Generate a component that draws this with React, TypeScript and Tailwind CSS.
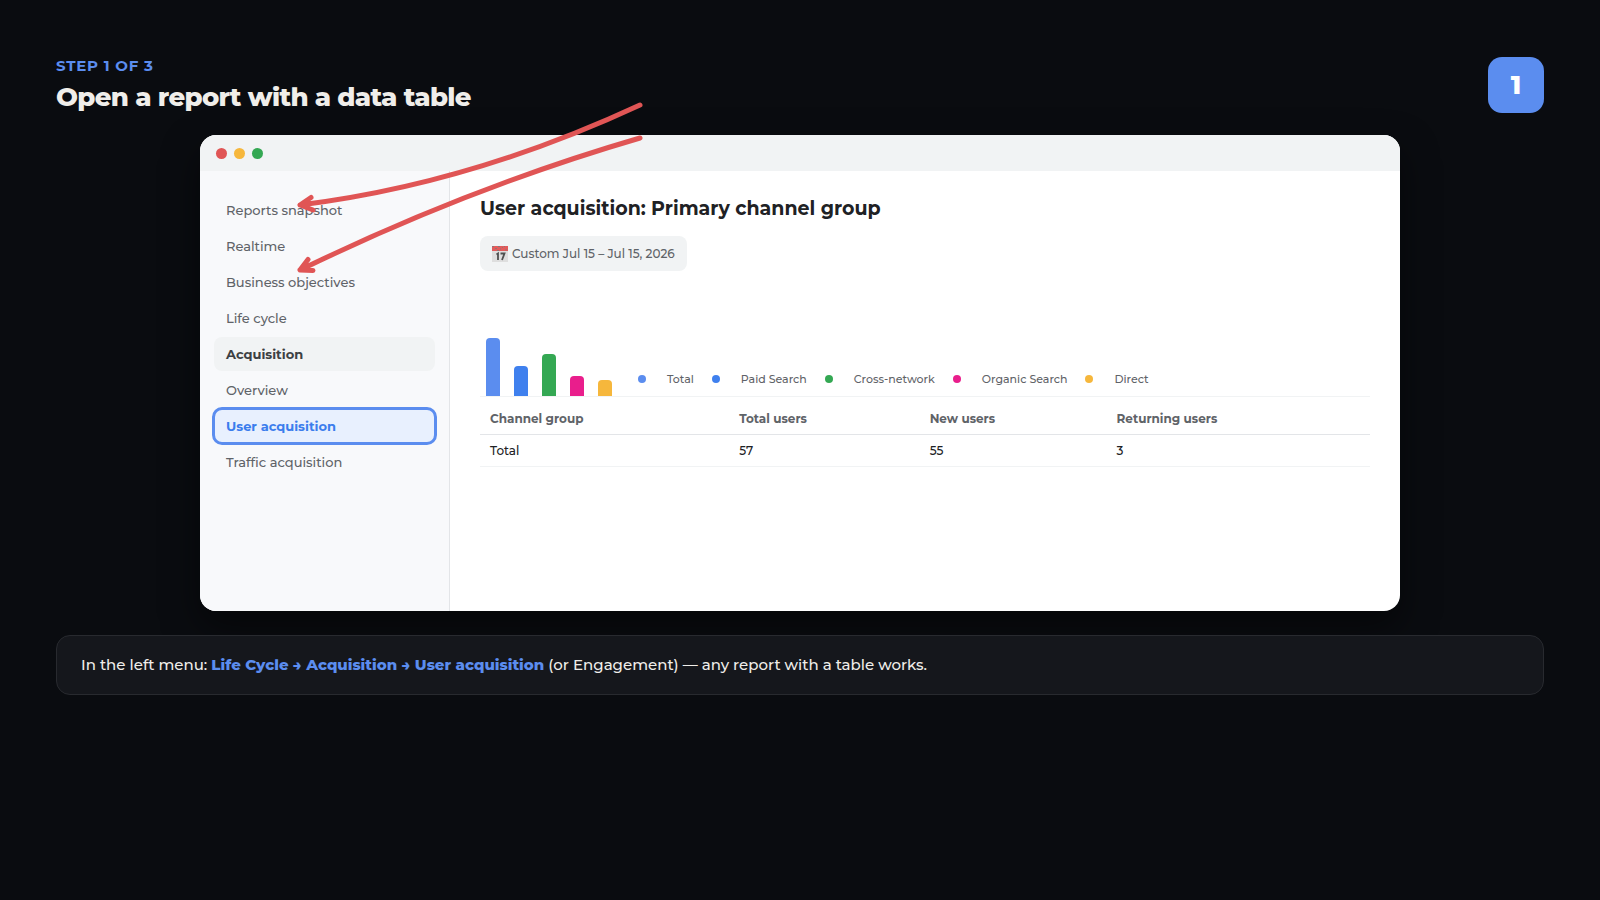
const menu = [
  { label: "Reports snapshot" },
  { label: "Realtime" },
  { label: "Business objectives" },
  { label: "Life cycle" },
  { label: "Acquisition", state: "open" },
  { label: "Overview" },
  { label: "User acquisition", state: "current" },
  { label: "Traffic acquisition" },
];

const bars = ["h-[58px] bg-[#5b8def]", "h-[30px] bg-[#3f80ee]", "h-[42px] bg-[#34a853]", "h-5 bg-[#e91e8c]", "h-4 bg-[#f6b73c]"];

const legend = [
  { label: "Total", dot: "bg-[#5b8def]" },
  { label: "Paid Search", dot: "bg-[#3f80ee]" },
  { label: "Cross-network", dot: "bg-[#34a853]" },
  { label: "Organic Search", dot: "bg-[#e91e8c]" },
  { label: "Direct", dot: "bg-[#f6b73c]" },
];

function menuClass(state?: string) {
  if (state === "open") return "bg-[#f1f3f4] font-bold text-[#3c4043]";
  if (state === "current") return "bg-[#e8f0fe] font-bold text-[#3b7ded] outline-3 -outline-offset-1 outline-[#5b8def]";
  return "font-medium text-[#5f6368]";
}

function CalendarIcon() {
  return (
    <svg className="size-4 shrink-0" viewBox="0 0 16 16" aria-hidden="true">
      <rect width="16" height="16" fill="#dedede" />
      <rect width="16" height="5" fill="#e35b5b" />
      <path d="M0 .5h2M3 2.500h2M6 .5h2M8 3h1M10 1.500h1M12 .5h1M14 3v1.500M5 4.500h2" stroke="#8d7676" />
      <path d="M4.500 8.500l1.500-1V14M8.500 7.500h4L10 14" fill="none" stroke="#505050" strokeWidth="1.800" />
    </svg>
  );
}

function Arrows() {
  return (
    <svg
      className="pointer-events-none absolute top-[-35px] left-[90px] h-[180px] w-[360px]"
      viewBox="290 100 360 180"
      fill="none"
      stroke="#e05555"
      strokeWidth="5"
      strokeLinecap="round"
      strokeLinejoin="round"
      aria-hidden="true"
    >
      <path d="M640 105Q470 184 300 205M311 197.500L300 205L313 210" />
      <path d="M640 138Q470 187.500 300 270M308 259.500L300 270L313 270.500" />
    </svg>
  );
}

export default function App() {
  return (
    <div className="min-h-screen bg-[#0a0c10] px-14 pt-14 pb-10 font-['Montserrat','Inter',sans-serif]">
      <header className="flex items-start justify-between">
        <div>
          <p className="text-[15px] leading-5 font-bold tracking-wider text-[#5b8def] uppercase">Step 1 of 3</p>
          <h1 className="mt-[5px] text-[26px] leading-8 font-extrabold tracking-tight text-[#f0eeea]">Open a report with a data table</h1>
        </div>
        <div className="mt-px flex size-14 items-center justify-center rounded-[14px] bg-[#5b8def] text-[26px] font-extrabold text-white">
          1
        </div>
      </header>

      <div className="relative mx-auto mt-[22px] max-w-[1200px]">
        <section className="overflow-hidden rounded-2xl bg-white shadow-[0_16px_36px_rgba(0,0,0,0.5)]">
          <div className="flex h-9 items-center gap-[7px] bg-[#f1f3f4] px-4">
            <span className="size-[11px] rounded-full bg-[#e05555]" />
            <span className="size-[11px] rounded-full bg-[#f6b73c]" />
            <span className="size-[11px] rounded-full bg-[#34a853]" />
          </div>
          <div className="flex min-h-[440px]">
            <nav className="flex w-[250px] shrink-0 flex-col gap-0.5 border-r border-[#e3e5e8] bg-[#f8f9fb] px-3.5 py-[22px]">
              {menu.map(({ label, state }) => (
                <a key={label} href="#" className={`rounded-lg px-3 py-[7px] text-[13px] leading-5 ${menuClass(state)}`}>
                  {label}
                </a>
              ))}
            </nav>
            <main className="min-w-0 flex-1 px-[30px] pt-[25px]">
              <h2 className="text-[19px] leading-[26px] font-bold text-[#202124]">User acquisition: Primary channel group</h2>
              <button className="mt-3.5 flex items-center gap-1 rounded-lg bg-[#f1f3f4] px-3 pt-[9px] pb-2 text-xs leading-[18px] font-medium text-[#5f6368]">
                <CalendarIcon />
                Custom Jul 15 – Jul 15, 2026
              </button>
              <div className="mt-[67px] flex items-end border-b border-[#f1f3f4] pl-1.5">
                <div className="flex items-end gap-3.5">
                  {bars.map((bar) => (
                    <span key={bar} className={`w-3.5 rounded-t ${bar}`} />
                  ))}
                </div>
                <ul className="mb-2 ml-[26px] flex gap-[18px] text-[11px] leading-[18px] font-medium text-[#5f6368]">
                  {legend.map(({ label, dot }) => (
                    <li key={label} className="flex items-center gap-[21px]">
                      <span className={`size-2 rounded-full ${dot}`} />
                      {label}
                    </li>
                  ))}
                </ul>
              </div>
              <table className="w-full table-fixed text-left text-xs leading-[18px] font-medium">
                <colgroup>
                  <col className="w-[28%]" />
                  <col className="w-[21.400%]" />
                  <col className="w-[21%]" />
                  <col />
                </colgroup>
                <thead>
                  <tr className="border-b border-[#e3e5e8] text-[#5f6368]">
                    <th className="px-2.5 pt-[13px] pb-1.5 font-bold">Channel group</th>
                    <th className="px-2.5 pt-[13px] pb-1.5 font-bold">Total users</th>
                    <th className="px-2.5 pt-[13px] pb-1.5 font-bold">New users</th>
                    <th className="px-2.5 pt-[13px] pb-1.5 font-bold">Returning users</th>
                  </tr>
                </thead>
                <tbody>
                  <tr className="border-b border-[#f1f3f4] text-[#202124]">
                    <td className="px-2.5 pt-[7px] pb-1.5">Total</td>
                    <td className="px-2.5 pt-[7px] pb-1.5">57</td>
                    <td className="px-2.5 pt-[7px] pb-1.5">55</td>
                    <td className="px-2.5 pt-[7px] pb-1.5">3</td>
                  </tr>
                </tbody>
              </table>
            </main>
          </div>
        </section>
        <Arrows />
      </div>

      <p className="relative mt-6 rounded-[14px] border border-[#282a2f] bg-[#15171c] px-6 py-[17px] text-[15px] leading-6 font-medium text-[#f0eeea]">
        In the left menu: <strong className="font-extrabold text-[#5b8def]">Life Cycle → Acquisition → User acquisition</strong> (or
        Engagement) — any report with a table works.
      </p>
    </div>
  );
}
